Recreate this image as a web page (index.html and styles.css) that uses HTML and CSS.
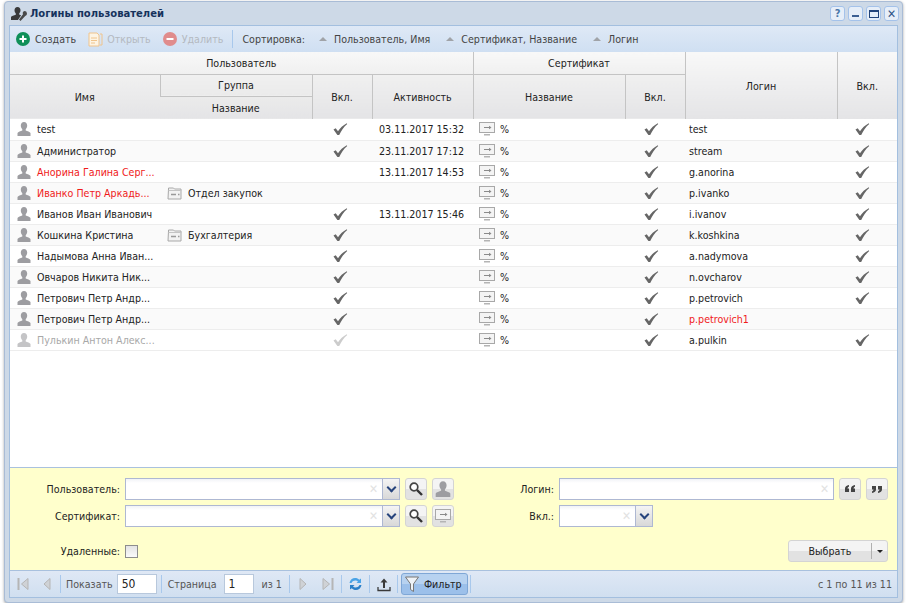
FILE: index.html
```html
<!DOCTYPE html>
<html lang="ru">
<head>
    <meta charset="UTF-8">
    <title>Логины пользователей</title>
    <link rel="stylesheet" href="styles.css">
</head>
<body>
    <svg class="defs" width="0" height="0">
        <symbol id="i-user" viewBox="0 0 16 16"><path d="M8 1c2 0 3.200 1.500 3.200 3.600 0 1.700-.8 3-1.500 3.700v1.200c1.500.7 4.300 1.200 4.800 2.500V15H1.500v-3c.5-1.300 3.300-1.800 4.800-2.500V8.300C5.600 7.600 4.800 6.300 4.800 4.600 4.800 2.500 6 1 8 1z" fill="#9d9da1"/></symbol>
        <symbol id="i-check" viewBox="0 0 16 16"><path d="M1.500 8.500l2.200-1.200 2.300 3C8 7.200 11 4.300 14.800 2.300l.4.600c-3.400 3-6 6.600-8 11.100H5.400z" fill="currentColor"/></symbol>
        <symbol id="i-cert" viewBox="0 0 16 16"><rect x=".5" y="1.500" width="15" height="10" fill="#f4f4f4" stroke="#a8a8a8"/><path d="M5 6.500h5" stroke="#8a8a8a"/><path d="M10 4.800l2.500 1.700-2.500 1.700z" fill="#8a8a8a"/><rect x="5" y="13" width="6" height="1.500" fill="#b4b4b4"/></symbol>
        <symbol id="i-folder" viewBox="0 0 16 16"><path d="M1.500 4V3h5l1 1h6.500v10h-13z" fill="#f2f2f2" stroke="#a8a8a8"/><path d="M1.500 5.500h13" stroke="#c4c4c4"/><path d="M4 9.500h5M11 9.500h1.500" stroke="#999" stroke-width="1.400"/></symbol>
        <symbol id="i-search" viewBox="0 0 16 16"><circle cx="6" cy="6" r="3.800" fill="#fff" stroke="#444" stroke-width="1.700"/><path d="M9 9l5 5" stroke="#333" stroke-width="2.400"/></symbol>
    </svg>

    <div class="window">
        <div class="title-bar">
            <svg class="title-icon" width="18" height="16" viewBox="0 0 18 16"><path d="M6.500 1c2 0 3 1.400 3 3.200 0 1.500-.7 2.500-1.300 3.200v1c.6.300 1.300.5 1.900.8L7 14H0v-3c.5-1.100 3-1.700 4.800-2.300V7.400C4.200 6.700 3.500 5.700 3.500 4.200 3.500 2.400 4.500 1 6.500 1z" fill="#3a3a3a"/><path d="M13.500 5a2.500 2.500 0 0 1 .7 4.900L9.500 15 8 13.500l4-5.200A2.500 2.500 0 0 1 13.500 5z" fill="#4a4a4a"/></svg>
            <span class="title-text">Логины пользователей</span>
            <div class="win-tools">
                <span class="win-btn">?</span>
                <span class="win-btn"><i class="glyph-min"></i></span>
                <span class="win-btn"><i class="glyph-max"></i></span>
                <span class="win-btn glyph-close">✕</span>
            </div>
        </div>

        <div class="panel">
            <div class="toolbar">
                <span class="tb-item"><svg width="14" height="14" viewBox="0 0 14 14"><circle cx="7" cy="7" r="7" fill="#0f8f58"/><path d="M7 3.500v7M3.500 7h7" stroke="#fff" stroke-width="2"/></svg>Создать</span>
                <span class="tb-item disabled open"><svg width="15" height="15" viewBox="0 0 15 15"><path d="M1 1h8l2 2v11H1z" fill="#fdf4e4" stroke="#f0c48c"/><path d="M3 6h6M3 8.500h6M3 11h4" stroke="#f0c48c"/><path d="M12 2h2v11h-2" fill="none" stroke="#f0c48c"/></svg>Открыть</span>
                <span class="tb-item disabled remove"><svg width="14" height="14" viewBox="0 0 14 14"><circle cx="7" cy="7" r="7" fill="#e08c8c"/><path d="M3.500 7h7" stroke="#fff" stroke-width="2"/></svg>Удалить</span>
                <span class="tb-sep"></span>
                <span class="sort-label">Сортировка:</span>
                <span class="sort-item">Пользователь, Имя</span>
                <span class="sort-item">Сертификат, Название</span>
                <span class="sort-item">Логин</span>
            </div>

            <div class="grid-wrap">
                <table class="grid">
                    <colgroup>
                        <col class="c-name"><col class="c-group"><col class="c-on"><col class="c-active">
                        <col class="c-cert"><col class="c-on"><col class="c-login"><col class="c-last">
                    </colgroup>
                    <thead>
                        <tr class="h1">
                            <th colspan="4">Пользователь</th>
                            <th colspan="2">Сертификат</th>
                            <th class="tall" rowspan="3">Логин</th>
                            <th class="tall" rowspan="3">Вкл.</th>
                        </tr>
                        <tr class="h2">
                            <th class="lower" rowspan="2">Имя</th>
                            <th>Группа</th>
                            <th class="lower" rowspan="2">Вкл.</th>
                            <th class="lower" rowspan="2">Активность</th>
                            <th class="lower" rowspan="2">Название</th>
                            <th class="lower" rowspan="2">Вкл.</th>
                        </tr>
                        <tr class="h3"><th>Название</th></tr>
                    </thead>
                    <tbody>
                        <tr>
                            <td><div class="with-icon"><svg class="ic"><use href="#i-user"/></svg><span class="clip">test</span></div></td>
                            <td></td>
                            <td class="mid"><svg class="ic"><use href="#i-check"/></svg></td>
                            <td class="date">03.11.2017 15:32</td>
                            <td><div class="with-icon"><svg class="ic"><use href="#i-cert"/></svg>%</div></td>
                            <td class="mid"><svg class="ic"><use href="#i-check"/></svg></td>
                            <td class="login">test</td>
                            <td class="mid"><svg class="ic"><use href="#i-check"/></svg></td>
                        </tr>
                        <tr>
                            <td><div class="with-icon"><svg class="ic"><use href="#i-user"/></svg><span class="clip">Администратор</span></div></td>
                            <td></td>
                            <td class="mid"><svg class="ic"><use href="#i-check"/></svg></td>
                            <td class="date">23.11.2017 17:12</td>
                            <td><div class="with-icon"><svg class="ic"><use href="#i-cert"/></svg>%</div></td>
                            <td class="mid"><svg class="ic"><use href="#i-check"/></svg></td>
                            <td class="login">stream</td>
                            <td class="mid"><svg class="ic"><use href="#i-check"/></svg></td>
                        </tr>
                        <tr>
                            <td><div class="with-icon"><svg class="ic"><use href="#i-user"/></svg><span class="clip red">Анорина Галина Серг...</span></div></td>
                            <td></td>
                            <td class="mid"></td>
                            <td class="date">13.11.2017 14:53</td>
                            <td><div class="with-icon"><svg class="ic"><use href="#i-cert"/></svg>%</div></td>
                            <td class="mid"><svg class="ic"><use href="#i-check"/></svg></td>
                            <td class="login">g.anorina</td>
                            <td class="mid"><svg class="ic"><use href="#i-check"/></svg></td>
                        </tr>
                        <tr>
                            <td><div class="with-icon"><svg class="ic"><use href="#i-user"/></svg><span class="clip red">Иванко Петр Аркадь...</span></div></td>
                            <td class="group"><div class="with-icon"><svg class="ic"><use href="#i-folder"/></svg>Отдел закупок</div></td>
                            <td class="mid"></td>
                            <td class="date"></td>
                            <td><div class="with-icon"><svg class="ic"><use href="#i-cert"/></svg>%</div></td>
                            <td class="mid"><svg class="ic"><use href="#i-check"/></svg></td>
                            <td class="login">p.ivanko</td>
                            <td class="mid"><svg class="ic"><use href="#i-check"/></svg></td>
                        </tr>
                        <tr>
                            <td><div class="with-icon"><svg class="ic"><use href="#i-user"/></svg><span class="clip">Иванов Иван Иванович</span></div></td>
                            <td></td>
                            <td class="mid"><svg class="ic"><use href="#i-check"/></svg></td>
                            <td class="date">13.11.2017 15:46</td>
                            <td><div class="with-icon"><svg class="ic"><use href="#i-cert"/></svg>%</div></td>
                            <td class="mid"><svg class="ic"><use href="#i-check"/></svg></td>
                            <td class="login">i.ivanov</td>
                            <td class="mid"><svg class="ic"><use href="#i-check"/></svg></td>
                        </tr>
                        <tr>
                            <td><div class="with-icon"><svg class="ic"><use href="#i-user"/></svg><span class="clip">Кошкина Кристина</span></div></td>
                            <td class="group"><div class="with-icon"><svg class="ic"><use href="#i-folder"/></svg>Бухгалтерия</div></td>
                            <td class="mid"><svg class="ic"><use href="#i-check"/></svg></td>
                            <td class="date"></td>
                            <td><div class="with-icon"><svg class="ic"><use href="#i-cert"/></svg>%</div></td>
                            <td class="mid"><svg class="ic"><use href="#i-check"/></svg></td>
                            <td class="login">k.koshkina</td>
                            <td class="mid"><svg class="ic"><use href="#i-check"/></svg></td>
                        </tr>
                        <tr>
                            <td><div class="with-icon"><svg class="ic"><use href="#i-user"/></svg><span class="clip">Надымова Анна Иван...</span></div></td>
                            <td></td>
                            <td class="mid"><svg class="ic"><use href="#i-check"/></svg></td>
                            <td class="date"></td>
                            <td><div class="with-icon"><svg class="ic"><use href="#i-cert"/></svg>%</div></td>
                            <td class="mid"><svg class="ic"><use href="#i-check"/></svg></td>
                            <td class="login">a.nadymova</td>
                            <td class="mid"><svg class="ic"><use href="#i-check"/></svg></td>
                        </tr>
                        <tr>
                            <td><div class="with-icon"><svg class="ic"><use href="#i-user"/></svg><span class="clip">Овчаров Никита Ник...</span></div></td>
                            <td></td>
                            <td class="mid"><svg class="ic"><use href="#i-check"/></svg></td>
                            <td class="date"></td>
                            <td><div class="with-icon"><svg class="ic"><use href="#i-cert"/></svg>%</div></td>
                            <td class="mid"><svg class="ic"><use href="#i-check"/></svg></td>
                            <td class="login">n.ovcharov</td>
                            <td class="mid"><svg class="ic"><use href="#i-check"/></svg></td>
                        </tr>
                        <tr>
                            <td><div class="with-icon"><svg class="ic"><use href="#i-user"/></svg><span class="clip">Петрович Петр Андр...</span></div></td>
                            <td></td>
                            <td class="mid"><svg class="ic"><use href="#i-check"/></svg></td>
                            <td class="date"></td>
                            <td><div class="with-icon"><svg class="ic"><use href="#i-cert"/></svg>%</div></td>
                            <td class="mid"><svg class="ic"><use href="#i-check"/></svg></td>
                            <td class="login">p.petrovich</td>
                            <td class="mid"><svg class="ic"><use href="#i-check"/></svg></td>
                        </tr>
                        <tr>
                            <td><div class="with-icon"><svg class="ic"><use href="#i-user"/></svg><span class="clip">Петрович Петр Андр...</span></div></td>
                            <td></td>
                            <td class="mid"><svg class="ic"><use href="#i-check"/></svg></td>
                            <td class="date"></td>
                            <td><div class="with-icon"><svg class="ic"><use href="#i-cert"/></svg>%</div></td>
                            <td class="mid"><svg class="ic"><use href="#i-check"/></svg></td>
                            <td class="login red">p.petrovich1</td>
                            <td class="mid"></td>
                        </tr>
                        <tr>
                            <td><div class="with-icon dim-icon"><svg class="ic"><use href="#i-user"/></svg><span class="clip dim">Пулькин Антон Алекс...</span></div></td>
                            <td></td>
                            <td class="mid off"><svg class="ic"><use href="#i-check"/></svg></td>
                            <td class="date"></td>
                            <td><div class="with-icon"><svg class="ic"><use href="#i-cert"/></svg>%</div></td>
                            <td class="mid"><svg class="ic"><use href="#i-check"/></svg></td>
                            <td class="login">a.pulkin</td>
                            <td class="mid"><svg class="ic"><use href="#i-check"/></svg></td>
                        </tr>
                    </tbody>
                </table>
            </div>

            <div class="filter">
                <div class="filter-col left">
                    <div class="filter-row">
                        <label class="lbl">Пользователь:</label>
                        <div class="combo"><span class="clear">✕</span><span class="trigger"></span></div>
                        <span class="square"><svg width="16" height="16"><use href="#i-search"/></svg></span>
                        <span class="square"><svg width="18" height="18"><use href="#i-user"/></svg></span>
                    </div>
                    <div class="filter-row">
                        <label class="lbl">Сертификат:</label>
                        <div class="combo"><span class="clear">✕</span><span class="trigger"></span></div>
                        <span class="square"><svg width="16" height="16"><use href="#i-search"/></svg></span>
                        <span class="square"><svg width="16" height="16"><use href="#i-cert"/></svg></span>
                    </div>
                    <div class="filter-row last">
                        <label class="lbl">Удаленные:</label>
                        <span class="checkbox"></span>
                    </div>
                </div>
                <div class="filter-col right">
                    <div class="filter-row">
                        <label class="lbl">Логин:</label>
                        <div class="combo"><span class="clear">✕</span></div>
                        <span class="square quote"><svg width="10" height="8" viewBox="0 0 10 8"><path d="M4 0v1.500C3 2 2.500 2.700 2.500 3.500H4V7H0V3.500C0 1.700 1.500.5 4 0zM10 0v1.500C9 2 8.500 2.700 8.500 3.500H10V7H6V3.500C6 1.700 7.500.5 10 0z" fill="#444"/></svg></span>
                        <span class="square quote"><svg width="10" height="8" viewBox="0 0 10 8"><path d="M0 8V6.500C1 6 1.500 5.300 1.500 4.500H0V1h4v3.500C4 6.300 2.500 7.500 0 8zM6 8V6.500C7 6 7.500 5.300 7.500 4.500H6V1h4v3.500C10 6.300 8.500 7.500 6 8z" fill="#444"/></svg></span>
                    </div>
                    <div class="filter-row">
                        <label class="lbl">Вкл.:</label>
                        <div class="combo small"><span class="clear">✕</span><span class="trigger"></span></div>
                    </div>
                    <div class="filter-row last end">
                        <div class="split-btn"><span class="split-main">Выбрать</span><span class="split-arrow"></span></div>
                    </div>
                </div>
            </div>

            <div class="pager">
                <svg class="pg-icon first" width="12" height="14" viewBox="0 0 12 14"><path d="M1.500 1v12" stroke="#b5b5b5" stroke-width="2"/><path d="M11 1.500v11L4.500 7z" fill="#cfd2d6" stroke="#b5b5b5"/></svg>
                <svg class="pg-icon prev" width="8" height="14" viewBox="0 0 8 14"><path d="M7 1.500v11L1 7z" fill="#cfd2d6" stroke="#b5b5b5"/></svg>
                <span class="pg-sep s1"></span>
                <span class="pg-text">Показать</span>
                <span class="pg-input w40">50</span>
                <span class="pg-sep s2"></span>
                <span class="pg-text">Страница</span>
                <span class="pg-input w30">1</span>
                <span class="pg-text of">из 1</span>
                <span class="pg-sep s3"></span>
                <svg class="pg-icon next" width="8" height="14" viewBox="0 0 8 14"><path d="M1 1.500v11L7 7z" fill="#cfd2d6" stroke="#b5b5b5"/></svg>
                <svg class="pg-icon last-page" width="12" height="14" viewBox="0 0 12 14"><path d="M10.500 1v12" stroke="#b5b5b5" stroke-width="2"/><path d="M1 1.500v11L7.500 7z" fill="#cfd2d6" stroke="#b5b5b5"/></svg>
                <span class="pg-sep s4"></span>
                <svg class="pg-icon refresh" width="15" height="16" viewBox="0 0 15 16"><path d="M1.500 7C2 3.500 5 1.500 8 2c1.500.2 2.500 1 3.300 1.800L13 2.500V7H8.500l1.500-1.500C8.500 4 5 4 3.500 7z" fill="#4aa3e6"/><path d="M13.500 9c-.5 3.500-3.500 5.500-6.500 5-1.500-.2-2.500-1-3.300-1.800L2 13.500V9h4.500L5 10.500c1.500 1.500 5 1.500 6.500-1.500z" fill="#2a7fc8"/></svg>
                <span class="pg-sep s5"></span>
                <svg class="pg-icon upload" width="14" height="15" viewBox="0 0 14 15"><path d="M7 1.500L3.500 5.500h2.500V11h2V5.500h2.500z" fill="#3a3a3a"/><path d="M1 10v3.500h12V10" fill="none" stroke="#3a3a3a" stroke-width="1.300"/></svg>
                <span class="pg-sep s6"></span>
                <span class="filter-btn"><svg width="14" height="17" viewBox="0 0 14 17"><path d="M.5 1h13L8.500 8v7.500l-3-2V8z" fill="#eef2f6" stroke="#777"/></svg>Фильтр</span>
                <span class="pg-sep s7"></span>
                <span class="pg-info">с 1 по 11 из 11</span>
            </div>
        </div>
    </div>
</body>
</html>
```

FILE: styles.css
```css
* {
    margin: 0;
    padding: 0;
    box-sizing: border-box;
}

body {
    background: #fff;
    font-family: "DejaVu Sans Condensed", "DejaVu Sans", sans-serif;
    font-size: 10.6px;
    color: #222;
    overflow: hidden;
}

.defs {
    position: absolute;
}

/* Window */
.window {
    width: 899px;
    height: 602px;
    margin: 1px 0 0 4px;
    padding: 0 4px 4px 4px;
    background: #cdd9e7;
    border: 1px solid #a9bcd6;
    border-radius: 4px;
    box-shadow: 0 1px 3px rgba(0,0,0,0.35);
    display: flex;
    flex-direction: column;
}

.title-bar {
    height: 23px;
    flex: none;
    display: flex;
    align-items: center;
    padding-left: 2px;
}

.title-icon {
    margin-right: 1px;
}

.title-text {
    font-weight: bold;
    font-size: 11.15px;
    color: #15325c;
}

.win-tools {
    margin-left: auto;
    display: flex;
    gap: 3px;
    margin-right: -1px;
}

.win-btn {
    width: 15px;
    height: 15px;
    background: #e6eef8;
    border: 1px solid #a4c2ea;
    border-radius: 3px;
    display: flex;
    align-items: center;
    justify-content: center;
    color: #4a76a8;
    font-weight: bold;
    font-size: 11px;
}

.glyph-min {
    width: 7px;
    height: 2px;
    margin-top: 5px;
    background: #3c5f92;
}

.glyph-max {
    width: 10px;
    height: 8px;
    border: 1px solid #23447a;
    border-top-width: 2px;
}

.glyph-close {
    color: #2f5488;
    font-weight: normal;
    font-size: 12px;
}

/* Panel */
.panel {
    flex: 1;
    display: flex;
    flex-direction: column;
    border: 1px solid #a3bfdf;
    background: #fff;
    min-height: 0;
}

.toolbar {
    height: 26px;
    flex: none;
    display: flex;
    align-items: center;
    padding-left: 6px;
    background: linear-gradient(#dfe9f6, #cfdff2);
    color: #444;
}

.tb-item {
    display: flex;
    align-items: center;
    gap: 5px;
}

.tb-item.disabled {
    color: #b4b9c0;
}

.tb-item.open {
    margin-left: 12px;
    gap: 4px;
}

.tb-item.remove {
    margin-left: 12px;
}

.tb-sep {
    width: 1px;
    height: 18px;
    margin: 0 9px;
    background: #a8c8ec;
}

.sort-label {
    margin-right: 14px;
}

.sort-item {
    margin-right: 16px;
    display: flex;
    align-items: center;
}

.sort-item::before {
    content: "";
    width: 0;
    height: 0;
    margin-right: 7px;
    border-left: 4px solid transparent;
    border-right: 4px solid transparent;
    border-bottom: 4px solid #a0a3a8;
}

/* Grid */
.grid-wrap {
    flex: 1;
    min-height: 0;
    background: #fff;
}

.grid {
    width: 887px;
    table-layout: fixed;
    border-collapse: collapse;
}

.c-name { width: 150px; }
.c-group { width: 152px; }
.c-on { width: 60px; }
.c-active { width: 101px; }
.c-cert { width: 152px; }
.c-login { width: 152px; }
.c-last { width: 60px; }

.grid th {
    font-weight: normal;
    color: #222;
    text-align: center;
    border-left: 1px solid #c4c4c4;
    border-bottom: 1px solid #c4c4c4;
}

.grid th:first-child {
    border-left: none;
}

.h1 th {
    height: 22px;
    background: linear-gradient(#f8f8f8, #f0f0f0);
}

.h2 th {
    height: 22px;
    background: linear-gradient(#f0f0f0, #ebebeb);
}

.h3 th {
    height: 23px;
    border-bottom: none;
    background: linear-gradient(#ebebeb, #e4e4e6);
}

.grid th.lower {
    border-bottom: none;
    background: linear-gradient(#f0f0f0, #e4e4e6);
}

.grid th.tall {
    border-bottom: none;
    background: linear-gradient(#f8f8f8, #e4e4e6);
}

.grid tbody tr {
    height: 21px;
}

.grid tbody tr:nth-child(even) {
    background: #fafafa;
}

.grid td {
    border-bottom: 1px solid #ededed;
    padding: 0 3px;
    white-space: nowrap;
    overflow: hidden;
    color: #222;
}

.grid td.group {
    padding-left: 4px;
}

.grid td.login {
    padding-left: 4px;
}

.with-icon {
    display: flex;
    align-items: center;
    gap: 5px;
    padding-left: 3px;
}

.ic {
    width: 16px;
    height: 16px;
    flex: none;
    display: block;
}

.grid td.mid {
    color: #666;
}

.mid .ic {
    margin-left: 15px;
}

.grid td:nth-child(3) .ic {
    margin-left: 17px;
}

.grid td:last-child .ic {
    margin-left: 14px;
}

.grid td.off {
    color: #ccc;
}

.grid td.date {
    text-align: center;
    padding-right: 5px;
}

.grid td.red,
.clip.red {
    color: #f01a1a;
}

.dim {
    color: #a8a8a8;
}

.dim-icon .ic {
    opacity: 0.6;
}

/* Filter */
.filter {
    height: 103px;
    flex: none;
    display: flex;
    background: #ffffcc;
    border-top: 1px solid #a9c1de;
    padding-top: 10px;
}

.filter-col {
    display: flex;
    flex-direction: column;
    gap: 5px;
}

.filter-col.left {
    width: 444px;
}

.filter-col.right {
    width: 434px;
}

.filter-row {
    height: 22px;
    display: flex;
    align-items: center;
    gap: 5px;
}

.filter-row.last {
    margin-top: 8px;
}

.filter-row.end {
    justify-content: flex-end;
}

.lbl {
    text-align: right;
}

.left .lbl {
    width: 110px;
}

.right .lbl {
    width: 100px;
}

.combo {
    width: 275px;
    height: 22px;
    display: flex;
    justify-content: flex-end;
    align-items: center;
    background: linear-gradient(#f1f3f7, #fff 4px);
    border: 1px solid #aeb8d2;
}

.combo.small {
    width: 94px;
}

.clear {
    color: #e2e2e2;
    font-size: 12px;
    margin-right: 4px;
    font-weight: bold;
}

.trigger {
    width: 17px;
    height: 100%;
    flex: none;
    background: linear-gradient(#f4f4f4, #d8d8d8);
    border-left: 1px solid #aeb8d2;
    display: flex;
    align-items: center;
    justify-content: center;
}

.trigger::after {
    content: "";
    width: 5px;
    height: 5px;
    margin-top: -3px;
    border-right: 2px solid #27447c;
    border-bottom: 2px solid #27447c;
    transform: rotate(45deg);
}

.square {
    width: 22px;
    height: 22px;
    flex: none;
    display: flex;
    align-items: center;
    justify-content: center;
    background: linear-gradient(#f4f4f4 50%, #e2e2e2 50%);
    border: 1px solid #d4d4d4;
    border-radius: 3px;
    color: #444;
}

.checkbox {
    width: 13px;
    height: 13px;
    background: linear-gradient(#e4e4e4, #fafafa);
    border: 1px solid #8d8d8d;
}

.split-btn {
    width: 100px;
    height: 22px;
    display: flex;
    align-items: center;
    background: linear-gradient(#f4f4f4 50%, #e2e2e2 50%);
    border: 1px solid #d4d4d4;
    border-radius: 3px;
}

.split-main {
    flex: 1;
    text-align: center;
    border-right: 1px solid #b0b0b0;
    line-height: 16px;
}

.split-arrow {
    width: 15px;
    display: flex;
    justify-content: center;
}

.split-arrow::after {
    content: "";
    border-left: 3px solid transparent;
    border-right: 3px solid transparent;
    border-top: 3px solid #222;
}

/* Pager */
.pager {
    height: 27px;
    flex: none;
    display: flex;
    align-items: center;
    padding-left: 7px;
    background: linear-gradient(#dfe8f5, #d0dff0);
    border-top: 1px solid #a9c1de;
    color: #555;
}

.pg-text.of {
    margin-left: 8px;
}

.pg-sep {
    width: 1px;
    height: 18px;
    background: #a8c8ec;
}

.first { margin-right: 14px; }
.prev { margin-right: 9px; }
.s1 { margin-right: 5px; }
.s2 { margin: 0 6px 0 4px; }
.s3 { margin: 0 9px 0 7px; }
.next { margin-right: 15px; }
.last-page { margin-right: 7px; }
.s4 { margin-right: 6px; }
.refresh { margin-right: 6px; }
.s5 { margin-right: 7px; }
.upload { margin-right: 6px; }
.s6 { margin-right: 3px; }
.s7 { margin-left: 2px; }

.pg-input {
    height: 20px;
    margin-left: 4px;
    padding-left: 4px;
    font-size: 12px;
    line-height: 18px;
    color: #222;
    background: #fff;
    border: 1px solid #b8c8dc;
}

.w40 {
    width: 40px;
}

.w30 {
    width: 30px;
    margin-left: 7px;
}

.filter-btn {
    width: 67px;
    height: 22px;
    display: flex;
    align-items: center;
    gap: 5px;
    padding-left: 3px;
    color: #222;
    background: linear-gradient(#b7d2f0 50%, #9cc0ea 50%);
    border: 1px solid #7fa7d6;
    border-radius: 3px;
}

.pg-info {
    margin-left: auto;
    margin-right: 5px;
}
```
